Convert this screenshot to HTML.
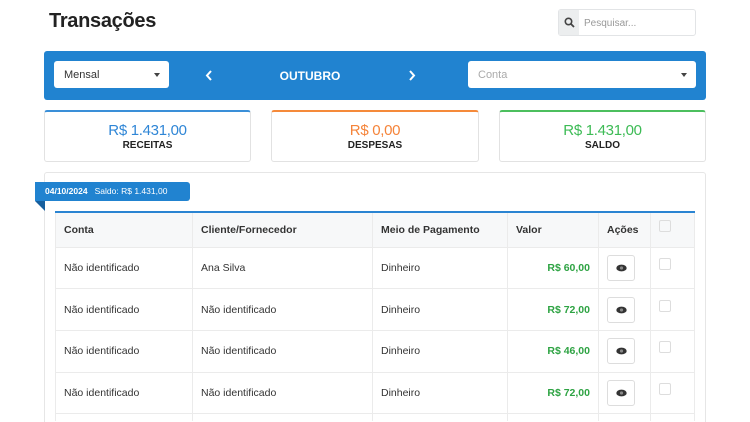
<!DOCTYPE html>
<html style="width:750px;height:422px;overflow:hidden"><head><meta charset="utf-8"><style>
*{box-sizing:border-box;margin:0;padding:0}
body{width:750px;height:422px;overflow:hidden;background:#fff;font-family:"Liberation Sans",sans-serif;color:#333;position:relative}
.a{position:absolute}
h1{position:absolute;left:49px;top:10px;font-size:20px;font-weight:bold;color:#222;letter-spacing:-0.3px}
.sel{background:#fff;border-radius:3px;height:27px;font-size:11px;line-height:29px;padding-left:10px}
.caret{position:absolute;right:9px;top:12px;border-left:3.5px solid transparent;border-right:3.5px solid transparent;border-top:4px solid #444}
.card{position:absolute;top:110px;height:52px;border:1px solid #e2e2e2;border-radius:3px;text-align:center}
.card .v{font-size:15px;margin-top:10px;letter-spacing:-0.3px}
.card .l{font-size:10px;font-weight:bold;color:#222;margin-top:1px}
table{position:absolute;left:55px;top:211px;width:640px;border-collapse:collapse;border-top:2px solid #2a84d2;font-size:10.5px;color:#333}
td,th{border:1px solid #ebebeb;text-align:left;padding-left:8px;font-weight:normal}
th{background:#f7f8f9;height:35px;font-weight:bold;color:#333}
td{height:41.7px}
tr.last td{height:7px;border-bottom:none}
.val{text-align:right;padding-right:8px;color:#2ea343;font-weight:bold}
.eye{display:inline-block;width:28px;height:26px;border:1px solid #ddd;border-radius:3px;position:relative;vertical-align:middle}
.eye svg{position:absolute;left:8px;top:8px}
.cb{display:inline-block;width:12px;height:12px;border:1px solid #ddd;border-radius:2px;vertical-align:middle;margin-top:-8px}
</style></head><body>
<h1>Transações</h1>
<div class="a" style="left:558px;top:9px;width:138px;height:27px;border:1px solid #e2e4e6;border-radius:3px;background:#fff">
 <div class="a" style="left:0;top:0;width:20px;height:25px;background:#eceeef"></div>
 <svg class="a" style="left:5px;top:7px" width="11" height="11" viewBox="0 0 11 11"><circle cx="4.5" cy="4.5" r="3.2" fill="none" stroke="#444" stroke-width="1.6"/><line x1="7" y1="7" x2="10" y2="10" stroke="#444" stroke-width="1.8"/></svg>
 <div class="a" style="left:25px;top:8px;font-size:10px;color:#999">Pesquisar...</div>
</div>
<div class="a" style="left:44px;top:51px;width:662px;height:49px;background:#2183d0;border-radius:3px"></div>
<div class="a sel" style="left:54px;top:61px;width:115px">Mensal<span class="caret"></span></div>
<svg class="a" style="left:205px;top:70px" width="8" height="11"><path d="M6 1L2 5.5L6 10" fill="none" stroke="#fff" stroke-width="2"/></svg>
<div class="a" style="left:250px;top:69px;width:120px;text-align:center;color:#fff;font-weight:bold;font-size:12px">OUTUBRO</div>
<svg class="a" style="left:408px;top:70px" width="8" height="11"><path d="M2 1L6 5.5L2 10" fill="none" stroke="#fff" stroke-width="2"/></svg>
<div class="a sel" style="left:468px;top:61px;width:228px;color:#aaa">Conta<span class="caret"></span></div>
<div class="card" style="left:44px;width:207px;border-top:2px solid #3a8fd8"><div class="v" style="color:#2f86d6">R$ 1.431,00</div><div class="l">RECEITAS</div></div>
<div class="card" style="left:271px;width:208px;border-top:2px solid #f58a3a"><div class="v" style="color:#f5843a">R$ 0,00</div><div class="l">DESPESAS</div></div>
<div class="card" style="left:499px;width:207px;border-top:2px solid #4cbf5e"><div class="v" style="color:#3dbb55">R$ 1.431,00</div><div class="l">SALDO</div></div>
<div class="a" style="left:44px;top:172px;width:662px;height:250px;border:1px solid #e6e6e6;border-bottom:none;border-radius:3px 3px 0 0"></div>
<div class="a" style="left:35px;top:182px;width:155px;height:19px;background:#2183d0;border-radius:0 3px 3px 0;color:#fff;font-size:8.5px;font-weight:bold;line-height:19px;padding-left:10px">04/10/2024 &nbsp; <span style="font-weight:normal">Saldo: R$ 1.431,00</span></div>
<svg class="a" style="left:35px;top:201px" width="10" height="10"><path d="M0 0H10V10Z" fill="#165f9e"/></svg>
<table>
<tr><th style="width:137px">Conta</th><th style="width:180px">Cliente/Fornecedor</th><th style="width:135px">Meio de Pagamento</th><th style="width:91px">Valor</th><th style="width:52px">Ações</th><th><span class="cb"></span></th></tr>
<tr><td>Não identificado</td><td>Ana Silva</td><td>Dinheiro</td><td class="val">R$ 60,00</td><td><span class="eye"><svg width="11" height="8" viewBox="0 0 11 8"><ellipse cx="5.5" cy="4" rx="5.2" ry="3.4" fill="#333"/><circle cx="5.5" cy="4" r="1.6" fill="#888"/></svg></span></td><td><span class="cb"></span></td></tr>
<tr><td>Não identificado</td><td>Não identificado</td><td>Dinheiro</td><td class="val">R$ 72,00</td><td><span class="eye"><svg width="11" height="8" viewBox="0 0 11 8"><ellipse cx="5.5" cy="4" rx="5.2" ry="3.4" fill="#333"/><circle cx="5.5" cy="4" r="1.6" fill="#888"/></svg></span></td><td><span class="cb"></span></td></tr>
<tr><td>Não identificado</td><td>Não identificado</td><td>Dinheiro</td><td class="val">R$ 46,00</td><td><span class="eye"><svg width="11" height="8" viewBox="0 0 11 8"><ellipse cx="5.5" cy="4" rx="5.2" ry="3.4" fill="#333"/><circle cx="5.5" cy="4" r="1.6" fill="#888"/></svg></span></td><td><span class="cb"></span></td></tr>
<tr><td>Não identificado</td><td>Não identificado</td><td>Dinheiro</td><td class="val">R$ 72,00</td><td><span class="eye"><svg width="11" height="8" viewBox="0 0 11 8"><ellipse cx="5.5" cy="4" rx="5.2" ry="3.4" fill="#333"/><circle cx="5.5" cy="4" r="1.6" fill="#888"/></svg></span></td><td><span class="cb"></span></td></tr>
<tr class="last"><td></td><td></td><td></td><td></td><td></td><td></td></tr>
</table>
</body></html>
